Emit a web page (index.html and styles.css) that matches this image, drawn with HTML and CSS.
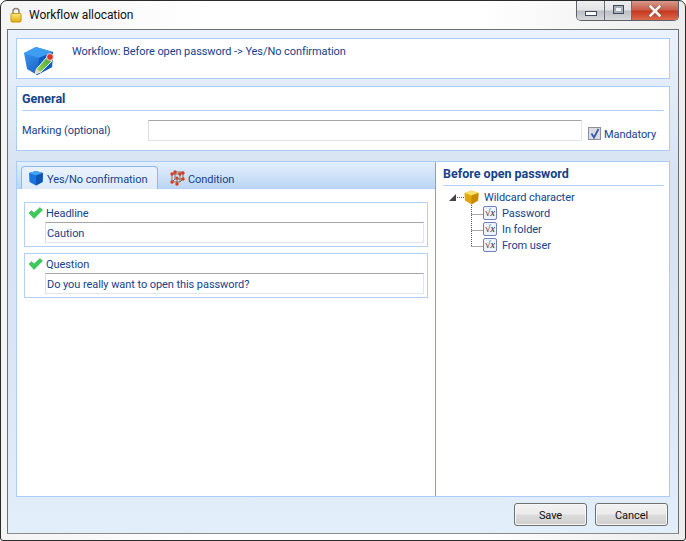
FILE: index.html
```html
<!DOCTYPE html>
<html>
<head>
    <meta charset="utf-8">
    <title>Workflow allocation</title>
    <link rel="stylesheet" href="styles.css">
</head>
<body>
<div class="window">
    <div class="titlebar">
        <svg class="lock" width="12" height="16" viewBox="0 0 12 16">
            <defs>
                <linearGradient id="gold" x1="0" y1="0" x2="0" y2="1">
                    <stop offset="0" stop-color="#fbe97a"/>
                    <stop offset="1" stop-color="#e2ae12"/>
                </linearGradient>
            </defs>
            <path d="M3 7V4.5a3 3 0 0 1 6 0V7" fill="none" stroke="#8a8478" stroke-width="1.5"/>
            <rect x="1" y="6.5" width="10" height="8.5" rx="1" fill="url(#gold)" stroke="#c9960f"/>
        </svg>
        <span class="title">Workflow allocation</span>
        <div class="controls">
            <div class="ctl ctl-min"><span class="glyph-min"></span></div>
            <div class="ctl ctl-max"><span class="glyph-max"></span></div>
            <div class="ctl ctl-close">
                <svg width="16" height="12" viewBox="0 0 16 12"><path d="M3.5 1.5 12.5 10.5M12.5 1.5 3.5 10.5" stroke="#5d4a46" stroke-width="4" stroke-linecap="square" opacity="0.45"/><path d="M3.5 1.5 12.5 10.5M12.5 1.5 3.5 10.5" stroke="#f4f1ee" stroke-width="2.6" stroke-linecap="square"/></svg>
            </div>
        </div>
    </div>

    <div class="client">
        <div class="panel intro">
            <svg class="big-icon" width="32" height="32" viewBox="0 0 32 32">
                <defs>
                    <linearGradient id="bluefront" x1="0" y1="0" x2="1" y2="1">
                        <stop offset="0" stop-color="#3f9bf0"/>
                        <stop offset="1" stop-color="#0c50b8"/>
                    </linearGradient>
                    <linearGradient id="pen" x1="0" y1="1" x2="1" y2="0">
                        <stop offset="0" stop-color="#a6dc5e"/>
                        <stop offset="1" stop-color="#3da52c"/>
                    </linearGradient>
                </defs>
                <path d="M1 8 13 2 30 7 29 22 14 30 4 24Z" fill="url(#bluefront)"/>
                <path d="M1 8 13 2 30 7 16 13Z" fill="#3c9df2"/>
                <path d="M16 13 30 7 29 22 14 30Z" fill="#0f5bc4"/>
                <path d="M12 29 13.5 24 24 12 29 16 18 27Z" fill="url(#pen)" stroke="#fff" stroke-width="1"/>
                <path d="M12 29 13.5 24 18 27Z" fill="#e9d8b8"/>
                <circle cx="27" cy="12" r="3.4" fill="#d8352c" stroke="#fff" stroke-width="0.8"/>
            </svg>
            <span class="intro-text">Workflow: Before open password -&gt; Yes/No confirmation</span>
        </div>

        <div class="panel general">
            <div class="heading">General</div>
            <div class="general-row">
                <label class="marking-label">Marking (optional)</label>
                <div class="input marking-input"></div>
                <div class="checkbox">
                    <svg width="11" height="11" viewBox="0 0 11 11"><path d="M2.5 5.5 5 9.5 9.5 1" fill="none" stroke="#3a57a8" stroke-width="1.8"/></svg>
                </div>
                <span class="mandatory">Mandatory</span>
            </div>
        </div>

        <div class="panel main">
            <div class="left">
                <div class="tabstrip">
                    <div class="tab active">
                        <svg width="16" height="16" viewBox="0 0 16 16">
                            <path d="M1 3 8 1 15 3 14.5 12 8 15.5 1.5 12Z" fill="#1c75dc"/>
                            <path d="M1 3 8 1 15 3 8 5.5Z" fill="#45a4f4"/>
                            <path d="M8 5.5 15 3 14.5 12 8 15.5Z" fill="#0f54b8"/>
                        </svg>
                        <span class="tab-label">Yes/No confirmation</span>
                    </div>
                    <div class="tab">
                        <svg width="16" height="16" viewBox="0 0 16 16">
                            <path d="M3 4H11V12H3ZM6 2H14V9H6ZM3 4 6 2M11 4 14 2M11 12 14 9M3 12 6 9M8 8 8 14" fill="none" stroke="#8a6a60" stroke-width="1"/>
                            <g fill="#dc3a1c">
                                <circle cx="3" cy="4" r="1.7"/><circle cx="11" cy="4" r="1.7"/><circle cx="3" cy="12" r="1.7"/>
                                <circle cx="14" cy="3" r="1.7"/><circle cx="14" cy="9" r="1.7"/><circle cx="8" cy="14" r="1.7"/><circle cx="6" cy="2" r="1.7"/><circle cx="8" cy="8" r="1.5"/>
                            </g>
                        </svg>
                        <span class="tab-label">Condition</span>
                    </div>
                </div>
                <div class="tab-body">
                    <div class="field">
                        <div class="field-head">
                            <svg width="15" height="12" viewBox="0 0 15 12"><path d="M1 6 3.5 3.5 6 6 12 0.5 14.5 3 6 11.5Z" fill="#3ccb5a" stroke="#24a943" stroke-width="0.5"/></svg>
                            <span class="field-label">Headline</span>
                        </div>
                        <div class="input field-input">Caution</div>
                    </div>
                    <div class="field">
                        <div class="field-head">
                            <svg width="15" height="12" viewBox="0 0 15 12"><path d="M1 6 3.5 3.5 6 6 12 0.5 14.5 3 6 11.5Z" fill="#3ccb5a" stroke="#24a943" stroke-width="0.5"/></svg>
                            <span class="field-label">Question</span>
                        </div>
                        <div class="input field-input">Do you really want to open this password?</div>
                    </div>
                </div>
            </div>
            <div class="right">
                <div class="heading">Before open password</div>
                <div class="tree">
                    <div class="tree-root">
                        <svg class="expander" width="7" height="7" viewBox="0 0 7 7"><path d="M0 7H7V0Z" fill="#444"/></svg>
                        <span class="dots"></span>
                        <svg width="15" height="15" viewBox="0 0 15 15">
                            <path d="M0.5 3 7.5 0.5 14.5 3 14 10.5 7.5 14.5 1 10.5Z" fill="#e2a70c"/>
                            <path d="M0.5 3 7.5 0.5 14.5 3 7.5 5.5Z" fill="#fbe06a"/>
                            <path d="M7.5 5.5 14.5 3 14 10.5 7.5 14.5Z" fill="#c98a06"/>
                        </svg>
                        <span class="tree-text">Wildcard character</span>
                    </div>
                    <div class="tree-kids">
                        <svg class="tree-lines" width="12" height="42" viewBox="0 0 12 42">
                            <path d="M0.5 0V41.5M0.5 9.5H12M0.5 25.5H12M0.5 41.5H12" stroke="#555" stroke-dasharray="1 1" fill="none"/>
                        </svg>
                        <ul class="kids">
                            <li><span class="sqrt">√x</span><span class="tree-text">Password</span></li>
                            <li><span class="sqrt">√x</span><span class="tree-text">In folder</span></li>
                            <li><span class="sqrt">√x</span><span class="tree-text">From user</span></li>
                        </ul>
                    </div>
                </div>
            </div>
        </div>

        <div class="footer">
            <div class="btn">Save</div>
            <div class="btn">Cancel</div>
        </div>
    </div>
</div>
</body>
</html>
```

FILE: styles.css
```css
html, body {
    margin: 0;
    padding: 0;
    background-color: white;
}

body {
    font-family: Roboto, sans-serif;
    font-size: 11px;
    letter-spacing: -0.07px;
    color: #15428b;
}

.window {
    box-sizing: border-box;
    width: 686px;
    height: 541px;
    display: flex;
    flex-direction: column;
    background: linear-gradient(to right, #f4f4f4, #ffffff 30%, #ffffff 70%, #ececec);
    border: 1px solid #2b2b2b;
    border-radius: 7px 7px 3px 3px;
}

/* title bar */
.titlebar {
    height: 28px;
    flex: none;
    display: flex;
    align-items: flex-start;
    padding-left: 9px;
}
.lock {
    margin-top: 6px;
}
.title {
    margin-left: 7px;
    margin-top: 7px;
    font-size: 12px;
    color: #111;
}
.controls {
    margin-left: auto;
    margin-right: 6px;
    display: flex;
    height: 19px;
    border: 1px solid #5c6068;
    border-top: 0;
    border-radius: 0 0 5px 5px;
    overflow: hidden;
}
.ctl {
    display: flex;
    align-items: center;
    justify-content: center;
    background: linear-gradient(to bottom, #eceef0, #e2e4e6 45%, #bcbfc3 55%, #d6d8da);
    border-right: 1px solid #6a6e74;
}
.ctl-min {
    width: 27px;
}
.ctl-max {
    width: 26px;
}
.ctl-close {
    width: 46px;
    border-right: 0;
    background: linear-gradient(to bottom, #d9988c, #c9604c 45%, #c63a22 55%, #dc6a4c);
}
.glyph-min {
    display: block;
    width: 10px;
    height: 3px;
    margin-top: 5px;
    border: 1px solid #3f4a5c;
    background-color: white;
}
.glyph-max {
    display: block;
    box-sizing: border-box;
    width: 11px;
    height: 9px;
    margin-bottom: 2px;
    border: 1px solid #3f4a5c;
    background-color: #eef0f2;
    box-shadow: inset 0 0 0 2px #a9aeb6;
}

/* client area */
.client {
    flex: 1;
    margin: 0 6px 6px 6px;
    padding: 8px 8px 0 8px;
    display: flex;
    flex-direction: column;
    border: 1px solid #6f6f6f;
    border-bottom-color: #8a8a8a;
    background: linear-gradient(to bottom, #e9f2fc, #d7e3f2 30%, #d9e5f4 60%, #e3eefb);
}
.panel {
    box-sizing: border-box;
    background-color: white;
    border: 1px solid #a9cdf8;
}
.heading {
    font-weight: bold;
    font-size: 12.5px;
    letter-spacing: 0;
    line-height: 16px;
    padding-bottom: 3px;
    border-bottom: 1px solid #b4d0f4;
}
.input {
    box-sizing: border-box;
    height: 21px;
    line-height: 21px;
    background-color: white;
    border: 1px solid #e3e6e9;
    border-top-color: #a6a6a6;
    border-left-color: #dcdcdc;
}

/* intro panel */
.intro {
    height: 41px;
    display: flex;
    align-items: flex-start;
    padding: 5px 0 0 6px;
}
.big-icon {
    margin-top: 1px;
}
.intro-text {
    margin-left: 17px;
    margin-top: 1px;
    line-height: 14px;
}

/* general panel */
.general {
    height: 65px;
    margin-top: 7px;
    padding: 4px 5px 0 5px;
}
.general-row {
    display: flex;
    align-items: flex-start;
    margin-top: 9px;
}
.marking-label {
    width: 126px;
    line-height: 22px;
}
.marking-input {
    width: 434px;
}
.checkbox {
    box-sizing: border-box;
    width: 13px;
    height: 13px;
    margin: 7px 0 0 6px;
    display: flex;
    align-items: center;
    justify-content: center;
    border: 1px solid #8f8f9c;
    background-color: #d8dde4;
}
.mandatory {
    margin: 7px 0 0 3px;
    line-height: 16px;
}

/* main panel */
.main {
    height: 336px;
    margin-top: 10px;
    display: flex;
}
.left {
    width: 418px;
    flex: none;
    display: flex;
    flex-direction: column;
    border-right: 1px solid #8fa0b4;
}
.tabstrip {
    height: 27px;
    flex: none;
    display: flex;
    align-items: flex-end;
    box-sizing: border-box;
    padding-left: 4px;
    background: linear-gradient(to bottom, #e3effd, #bcd6f5);
    border-bottom: 1px solid #b4d0f4;
}
.tab {
    height: 23px;
    display: flex;
    align-items: center;
    gap: 3px;
    padding: 0 7px;
    margin-right: 4px;
    margin-bottom: -1px;
}
.tab svg {
    flex: none;
}
.tab-label {
    white-space: nowrap;
    padding-top: 3px;
}
.tab.active {
    box-sizing: border-box;
    width: 137px;
    padding-left: 6px;
    border: 1px solid #8fb8ec;
    border-bottom: 0;
    border-radius: 4px 4px 0 0;
    background: linear-gradient(to bottom, #e9f2fc, #dfebf9);
}
.tab-body {
    flex: 1;
    padding: 13px 7px 0 7px;
}
.field {
    box-sizing: border-box;
    height: 45px;
    margin-bottom: 6px;
    padding: 1px 3px 0 3px;
    border: 1px solid #b4d0f4;
}
.field-head {
    display: flex;
    align-items: center;
    gap: 3px;
    height: 17px;
    line-height: 16px;
}
.field-label {
    padding-top: 2px;
}
.field-input {
    margin-left: 17px;
    margin-top: 1px;
    padding-left: 1px;
}

/* right side */
.right {
    flex: 1;
    padding: 4px 5px 0 7px;
}
.tree {
    padding: 3px 0 0 6px;
}
.tree-root {
    display: flex;
    align-items: center;
    height: 16px;
}
.expander {
    flex: none;
}
.dots {
    width: 7px;
    margin-left: 1px;
    border-top: 1px dotted #555;
}
.tree-text {
    margin-left: 5px;
    padding-top: 2px;
    line-height: 16px;
}
.tree-kids {
    display: flex;
    align-items: flex-start;
    margin-left: 22px;
}
.tree-lines {
    flex: none;
}
.kids {
    list-style: none;
    margin: 0;
    padding: 0;
}
.kids li {
    display: flex;
    align-items: center;
    height: 16px;
}
.sqrt {
    box-sizing: border-box;
    width: 14px;
    height: 14px;
    font-family: "Liberation Serif", serif;
    font-size: 10px;
    font-style: italic;
    line-height: 12px;
    text-align: center;
    color: #222;
    background-color: #eef2fa;
    border: 1px solid #6f80bc;
    border-radius: 2px;
}

/* buttons */
.footer {
    flex: 1;
    display: flex;
    justify-content: flex-end;
    align-items: flex-start;
    gap: 8px;
    padding: 6px 2px 0 0;
}
.btn {
    box-sizing: border-box;
    width: 73px;
    height: 23px;
    line-height: 23px;
    text-align: center;
    color: #111;
    border: 1px solid #707070;
    border-radius: 3px;
    background: linear-gradient(to bottom, #f2f2f2, #ebebeb 48%, #dcdcdc 52%, #cfcfcf);
    box-shadow: inset 0 0 0 1px #f8f8f8;
}
```
